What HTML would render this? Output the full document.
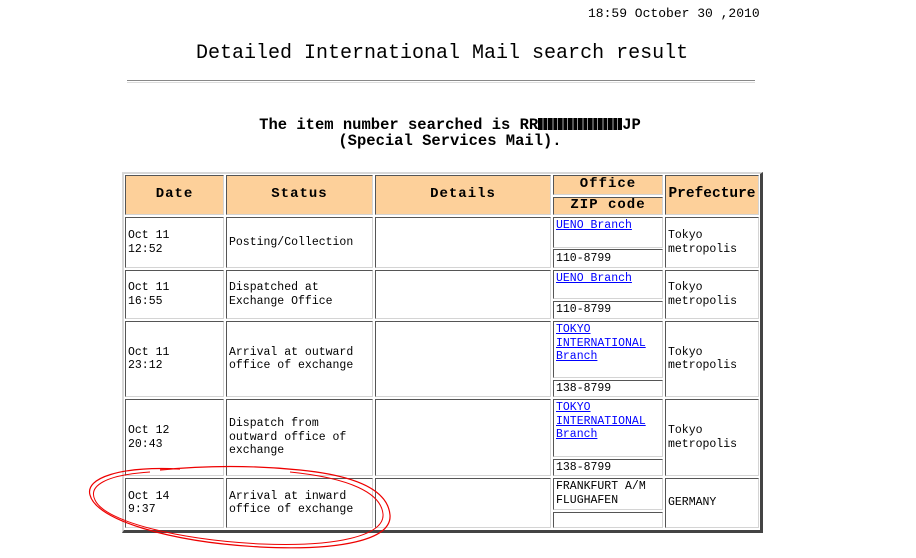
<!DOCTYPE html>
<html><head><meta charset="utf-8"><style>
body{margin:0;width:916px;height:558px;background:#fff;position:relative;overflow:hidden;font-family:"Liberation Mono","Noto Sans CJK JP",monospace;color:#000}
.a{position:absolute}
.c{position:absolute;box-sizing:border-box;border:1px solid;border-color:#555 #d4d4d4 #d4d4d4 #555;display:flex;align-items:center;padding-left:2px;font-size:11.5px;line-height:13.5px;white-space:pre}
.h{background:#fdd09a;justify-content:center;padding:0;font-weight:bold;font-size:14px;letter-spacing:1px}
.t{align-items:flex-start;padding-top:1px}
a{color:#00f;text-decoration:underline}
</style></head><body>
<div class="a" style="left:588px;top:6px;font-size:13px;">18:59 October 30 ,2010</div>
<div class="a" style="left:196px;top:42px;font-size:20px;">Detailed International Mail search result</div>
<div class="a" style="left:127px;top:80px;width:628px;height:1px;border-top:1px solid #888;border-bottom:1px solid #ddd"></div>
<div class="a" style="left:0;top:117px;width:900px;text-align:center;font-size:15.5px;font-weight:bold;line-height:16px;">The item number searched is <span style="position:relative">RR<span style="display:inline-block;width:84px;height:12px;vertical-align:-1px;background:repeating-linear-gradient(90deg,#000 0 4px,#555 4px 6px,#000 6px 9px,#999 9px 10px)"></span>JP</span><br>(Special Services Mail).</div>
<div class="a" style="left:122px;top:172px;width:641px;height:361px;box-sizing:border-box;border:2px solid;border-color:#d8d8d8 #444 #444 #d8d8d8;border-width:2px 3px 3px 2px"></div>

<div class="c h" style="left:125px;top:175px;width:99px;height:40px">Date</div>
<div class="c h" style="left:226px;top:175px;width:147px;height:40px">Status</div>
<div class="c h" style="left:375px;top:175px;width:176px;height:40px">Details</div>
<div class="c h" style="left:553px;top:175px;width:110px;height:20px">Office</div>
<div class="c h" style="left:553px;top:197px;width:110px;height:18px">ZIP code</div>
<div class="c h" style="left:665px;top:175px;width:94px;height:40px;letter-spacing:0;font-size:14.5px">Prefecture</div>

<div class="c" style="left:125px;top:217px;width:99px;height:51px">Oct 11
12:52</div>
<div class="c" style="left:226px;top:217px;width:147px;height:51px">Posting/Collection</div>
<div class="c" style="left:375px;top:217px;width:176px;height:51px"></div>
<div class="c t" style="left:553px;top:217px;width:110px;height:31px"><a>UENO Branch</a></div>
<div class="c" style="left:553px;top:249px;width:110px;height:19px">110-8799</div>
<div class="c" style="left:665px;top:217px;width:94px;height:51px">Tokyo
metropolis</div>

<div class="c" style="left:125px;top:270px;width:99px;height:49px">Oct 11
16:55</div>
<div class="c" style="left:226px;top:270px;width:147px;height:49px">Dispatched at
Exchange Office</div>
<div class="c" style="left:375px;top:270px;width:176px;height:49px"></div>
<div class="c t" style="left:553px;top:270px;width:110px;height:29px"><a>UENO Branch</a></div>
<div class="c" style="left:553px;top:301px;width:110px;height:18px">110-8799</div>
<div class="c" style="left:665px;top:270px;width:94px;height:49px">Tokyo
metropolis</div>

<div class="c" style="left:125px;top:321px;width:99px;height:76px">Oct 11
23:12</div>
<div class="c" style="left:226px;top:321px;width:147px;height:76px">Arrival at outward
office of exchange</div>
<div class="c" style="left:375px;top:321px;width:176px;height:76px"></div>
<div class="c t" style="left:553px;top:321px;width:110px;height:57px"><a>TOKYO
INTERNATIONAL
Branch</a></div>
<div class="c" style="left:553px;top:380px;width:110px;height:17px">138-8799</div>
<div class="c" style="left:665px;top:321px;width:94px;height:76px">Tokyo
metropolis</div>

<div class="c" style="left:125px;top:399px;width:99px;height:77px">Oct 12
20:43</div>
<div class="c" style="left:226px;top:399px;width:147px;height:77px">Dispatch from
outward office of
exchange</div>
<div class="c" style="left:375px;top:399px;width:176px;height:77px"></div>
<div class="c t" style="left:553px;top:399px;width:110px;height:58px"><a>TOKYO
INTERNATIONAL
Branch</a></div>
<div class="c" style="left:553px;top:459px;width:110px;height:17px">138-8799</div>
<div class="c" style="left:665px;top:399px;width:94px;height:77px">Tokyo
metropolis</div>

<div class="c" style="left:125px;top:478px;width:99px;height:50px">Oct 14
9:37</div>
<div class="c" style="left:226px;top:478px;width:147px;height:50px">Arrival at inward
office of exchange</div>
<div class="c" style="left:375px;top:478px;width:176px;height:50px"></div>
<div class="c t" style="left:553px;top:478px;width:110px;height:32px">FRANKFURT A/M
FLUGHAFEN</div>
<div class="c" style="left:553px;top:512px;width:110px;height:16px"></div>
<div class="c" style="left:665px;top:478px;width:94px;height:50px">GERMANY</div>

<svg class="a" style="left:0;top:0" width="916" height="558">
<path d="M180 469 C120 466 85 478 90 495 C96 520 170 542 260 547 C340 551 392 540 390 515 C388 492 360 476 300 470 C250 465 200 466 160 470" fill="none" stroke="#e00" stroke-width="1.2"/>
<path d="M150 472 C105 475 88 486 95 500 C105 522 180 540 262 544 C335 547 385 536 383 514 C381 493 350 478 290 472" fill="none" stroke="#e00" stroke-width="1"/>
</svg>
</body></html>
